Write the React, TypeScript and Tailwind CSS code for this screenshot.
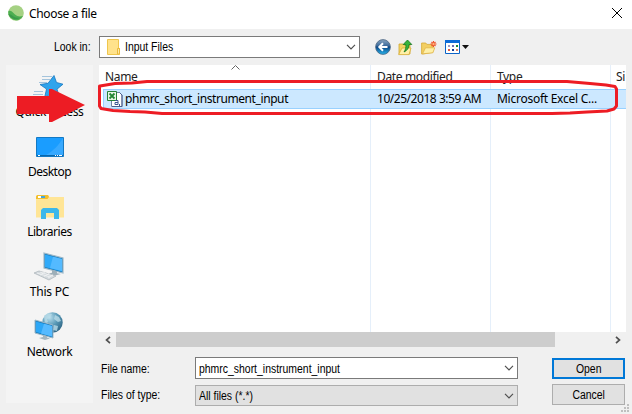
import type { ReactNode } from "react";

const ui = "font-['Noto_Sans','Open_Sans',sans-serif]";
const classic = "font-['Liberation_Sans',Arial,sans-serif]";

function Chevron({ className = "" }: { className?: string }) {
  return (
    <svg className={className} width="10" height="6" viewBox="0 0 10 6" fill="none" stroke="#505050" strokeWidth="1.2">
      <path d="M1 .8 5 4.800 9 .8" />
    </svg>
  );
}

function AppLogo() {
  return (
    <svg width="16" height="16" viewBox="0 0 16 16">
      <circle cx="8" cy="8" r="7.800" fill="#a5d183" />
      <path d="M.4 6C3 5 5 7.500 7 9.500s5 2.300 8 1.500A7.800 7.800 0 0 1 .4 6Z" fill="#4cae50" />
      <path d="M.4 9C3 8.500 5 12 8 12.500s4 .2 5.500-1A7.800 7.800 0 0 1 .4 9Z" fill="#3b9b4a" />
    </svg>
  );
}

function FolderIcon() {
  return (
    <svg width="14" height="16" viewBox="0 0 14 16">
      <path d="M.5.5h11v9h1v6H.5Z" fill="#ffe28b" stroke="#efc64d" />
      <path d="M10.500 9.500h2v5.500h-2Z" fill="#ffe9a6" stroke="#e9b93d" />
    </svg>
  );
}

function BackIcon() {
  return (
    <svg width="16" height="16" viewBox="0 0 16 16">
      <defs>
        <linearGradient id="back" x1="0" y1="0" x2="0" y2="1">
          <stop offset="0" stopColor="#8ba6c0" />
          <stop offset=".42" stopColor="#3c6a9b" />
          <stop offset=".5" stopColor="#0c4584" />
          <stop offset="1" stopColor="#27b5ee" />
        </linearGradient>
      </defs>
      <circle cx="8" cy="8" r="7.400" fill="url(#back)" stroke="#4c6682" strokeWidth=".8" />
      <path d="M12.500 8H5M8 4.300 4.300 8 8 11.700" fill="none" stroke="#fff" strokeWidth="2" />
    </svg>
  );
}

function UpIcon() {
  return (
    <svg width="15" height="17" viewBox="0 0 15 17">
      <path d="M1 5h4l1 1h6v9H1Z" fill="#f3d565" stroke="#cfa52f" strokeWidth=".8" />
      <path d="M.6 15.600 4 9h9l-2 6.600Z" fill="#fff0a8" stroke="#d9ad35" strokeWidth=".8" />
      <path d="M9.500 1 5.200 5.500h2.600c.4 3-.2 5-1.800 7.500 3-1.300 5-4 5-7.500h2.800Z" fill="#37b53c" stroke="#15751d" strokeWidth=".8" />
    </svg>
  );
}

function NewFolderIcon() {
  return (
    <svg width="16" height="15" viewBox="0 0 16 15">
      <path d="M.6 3h4.200l1 1.400h6v8L2 14H.6Z" fill="#f3cf62" stroke="#d7a936" strokeWidth=".8" />
      <path d="m1.500 13.800 3-6h9.300l-2 5Z" fill="#fff0a8" stroke="#e0b54a" strokeWidth=".8" />
      <path d="M12.500 1v6M9.500 4h6M10.500 2l4 4M14.500 2l-4 4" stroke="#ee5028" strokeWidth="1.100" />
      <circle cx="12.500" cy="4" r="1.200" fill="#ffb27c" />
    </svg>
  );
}

function ViewIcon() {
  return (
    <svg width="24" height="14" viewBox="0 0 24 14">
      <path d="M.5.5h14v13H.5Z" fill="#fff" stroke="#0c64c8" />
      <path d="M0 0h15v3H0Z" fill="#0c6bd8" />
      <path d="M3 5h2v2H3Z" fill="#9b9bc9" />
      <path d="M7 5h2v2H7Z" fill="#6d6db4" />
      <path d="M11 5h2v2h-2Z" fill="#1c8b32" />
      <path d="M3 9h2v2H3Z" fill="#e55a3c" />
      <path d="M7 9h2v2H7Z" fill="#0a3a98" />
      <path d="M11 9h2v2h-2Z" fill="#d88166" />
      <path d="M17 5h7l-3.500 4Z" fill="#111" />
    </svg>
  );
}

function QuickAccessIcon() {
  return (
    <svg className="mt-[1px] mr-[3px]" width="32" height="24" viewBox="0 0 32 24">
      <path d="m22 .5 2.500 7 6.500 1.700-6 5L27.500 22 20 18l-7.500 5 2-9L8 9.500l8-1.200Z" fill="#2fa4ec" stroke="#1877c0" strokeWidth=".8" />
      <path d="M10 1.500h10M10 4.500h9M7 7.500h8M2 16.500h9M1 19.500h10" stroke="#8fb8d6" strokeWidth=".8" />
    </svg>
  );
}

function DesktopIcon() {
  return (
    <svg width="28" height="20" viewBox="0 0 28 20">
      <path d="M.5.5h27v19H.5Z" fill="#1a9dff" stroke="#1379c4" />
      <path d="M27 1v17H10C17 14 23 8 27 1Z" fill="#38a9ff" />
      <path d="M1 18.500h26" stroke="#0966aa" />
      <path d="M2 18.500h2M19 18.500h1M21 18.500h1M23 18.500h3" stroke="#fff" />
    </svg>
  );
}

function LibrariesIcon() {
  return (
    <svg className="mt-[1px]" width="28" height="25" viewBox="0 0 28 25">
      <path d="M0 2 1 0h11l1.500 2H28v20.500H0Z" fill="#ffe596" />
      <path d="M0 4V1.500L1 0h11l1 2-1.500 2Z" fill="#f2bf2f" />
      <path d="M2 1h7v2H2Z" fill="#fff" />
      <path d="M5 1h4v2H5Z" fill="#42a6dd" />
      <path d="M5 24V15l2-2h14l2 2v9h-5v-6h-8v6Z" fill="#3db7ea" />
    </svg>
  );
}

function PcIcon() {
  return (
    <svg className="mr-[2px]" width="32" height="29" viewBox="0 0 32 29">
      <path d="m11 1 19 5v15L11 16Z" fill="#187bb9" stroke="#9db8c9" strokeWidth="1.200" />
      <path d="m12 2.500 17 4.500v12.500L12 15Z" fill="#30aaf9" />
      <path d="m20 4.700 9 2.300v12L17 16Z" fill="#54baff" />
      <path d="m19 18 5 1.300v2l4 .7-6 1.500-6-2 3-.8Z" fill="#9eafb9" />
      <path d="m1 21 5-2 17 5-7 4Z" fill="#d3d9dd" stroke="#a9b2b8" strokeWidth=".7" />
      <path d="m4 21 13 4M7 20l13 4M7 23l5-3M11 24.500l5-3M15 26l5-3" stroke="#f1f3f4" strokeWidth=".8" />
    </svg>
  );
}

function NetworkIcon() {
  return (
    <svg className="mr-[1px]" width="30" height="29" viewBox="0 0 30 29">
      <defs>
        <radialGradient id="globe" cx=".35" cy=".25" r=".85">
          <stop offset="0" stopColor="#bce0ee" />
          <stop offset=".5" stopColor="#5798b6" />
          <stop offset="1" stopColor="#285d7c" />
        </radialGradient>
      </defs>
      <circle cx="18.500" cy="10.500" r="10.200" fill="url(#globe)" />
      <path d="m10 4 4-3 4 1-2 4-3 1 1 3-3 2ZM21 3l4 2 2 4-3 1-4-3ZM20 13l4 1-1 5-4-1Z" fill="#b8dbe7" opacity=".8" />
      <path d="m1 8 18 5v13L1 21Z" fill="#187bb9" stroke="#9db8c9" />
      <path d="m2 9.500 16 4.400v10.600L2 20Z" fill="#2ca7f7" />
      <path d="m10 11.700 8 2.200v10.600L7 21.400Z" fill="#55baff" />
      <path d="m9 23 4 1.200v1.300l3 1-5 1.500-6-2 4-1Z" fill="#a6b7c0" />
    </svg>
  );
}

function ExcelIcon() {
  return (
    <svg width="16" height="16" viewBox="0 0 16 16">
      <path d="M4.500 1.500h8l2.500 2.500v11.500H4.500Z" fill="#fff" stroke="#7182a3" />
      <path d="M12.500 1.500 15 4v11.500h-10" fill="none" stroke="#4a5d8c" />
      <path d="M.5.5h9v9h-9Z" fill="#e9f5e4" stroke="#278235" />
      <path d="m2.500 2.500 5 5M7.500 2.500l-5 5" stroke="#258735" strokeWidth="1.800" />
      <path d="M8 9.500h3v4H8v-2h3" fill="none" stroke="#3c5791" />
      <path d="M12.500 13v2" stroke="#3c5791" />
    </svg>
  );
}

function Place({ icon, label, track }: { icon: ReactNode; label: string; track: string }) {
  return (
    <div className="flex h-[60px] flex-col items-center">
      <div className="flex h-[33px] items-center justify-center">{icon}</div>
      <span className={`mt-[1px] text-[12px] leading-4 ${track}`}>{label}</span>
    </div>
  );
}

function Narrow({ children, className = "origin-left" }: { children: ReactNode; className?: string }) {
  return <span className={`inline-block scale-x-[0.87] whitespace-nowrap ${className}`}>{children}</span>;
}

function Annotations() {
  return (
    <svg className="pointer-events-none absolute inset-0" width="632" height="414" viewBox="0 0 632 414">
      <path d="M17 96h32v-7h3l33 16-33 17h-3v-8H17Z" fill="#ed1c24" />
      <path
        d="M100 86 115 83.500 132 83 147 81.500H567L590 83.500 606 85 615 86.500 616.500 89V106L614 109 607 111 587 112 570 113 552 113.500H162L145 112 130 111.500 113 110.500 101 108.500 99.500 106V86Z"
        fill="none"
        stroke="#ed1c24"
        strokeWidth="3"
        strokeLinejoin="round"
      />
    </svg>
  );
}

export default function App() {
  return (
    <div className={`relative flex h-[414px] w-[632px] flex-col overflow-hidden bg-[#f0f0f0] text-black ${ui}`}>
      <header className="flex h-[29px] shrink-0 items-center bg-white pr-[10px] pl-2">
        <div className="mt-[-3px]"><AppLogo /></div>
        <h1 className="mt-[-2px] ml-[5px] flex-1 text-[12px] leading-4 tracking-[-0.33px]">Choose a file</h1>
        <svg className="mt-[-3px]" width="10" height="10" viewBox="0 0 10 10" stroke="#000"><path d="m0 0 10 10M10 0 0 10" /></svg>
      </header>

      <div className={`flex h-[36px] shrink-0 pt-[7px] ${classic}`}>
        <span className="w-[99px] pt-[3px] pl-[54px] text-[12px] leading-4"><Narrow>Look in:</Narrow></span>
        <div className="flex h-[22px] w-[261px] items-center border border-[#7a7a7a] bg-white pr-[3px] pl-[7px]">
          <FolderIcon />
          <span className="ml-[4px] flex-1 text-[12px] leading-4"><Narrow>Input Files</Narrow></span>
          <Chevron />
        </div>
        <div className="ml-[15px] flex h-[22px] items-center">
          <BackIcon />
          <div className="ml-[7px]"><UpIcon /></div>
          <div className="ml-[8px]"><NewFolderIcon /></div>
          <div className="ml-[8px]"><ViewIcon /></div>
        </div>
      </div>

      <div className="flex flex-1 pl-[6px]">
        <nav className="h-[338px] w-[87px] shrink-0 bg-[#f4f4f4] pt-[5px]">
          <Place icon={<QuickAccessIcon />} label="Quick access" track="tracking-[-0.3px]" />
          <Place icon={<DesktopIcon />} label="Desktop" track="tracking-[-0.5px]" />
          <Place icon={<LibrariesIcon />} label="Libraries" track="tracking-[-0.45px]" />
          <Place icon={<PcIcon />} label="This PC" track="tracking-[-0.2px]" />
          <Place icon={<NetworkIcon />} label="Network" track="tracking-[-0.4px]" />
        </nav>

        <main className="ml-[6px] flex w-[527px] flex-col">
          <div className="relative h-[267px] shrink-0 bg-white text-[12px] leading-4">
            <div className="absolute inset-0 grid grid-cols-[272px_120px_120px_15px]">
              <i className="border-r border-[#e5effa]" />
              <i className="border-r border-[#e5effa]" />
              <i className="border-r border-[#e5effa]" />
            </div>
            <svg className="absolute top-0 left-[132px]" width="9" height="5" viewBox="0 0 9 5" fill="none" stroke="#666"><path d="M.5 4.500 4.500.5l4 4" /></svg>
            <div className="relative grid h-[24px] grid-cols-[272px_120px_120px_15px] pt-[4px] tracking-[-0.35px] whitespace-nowrap text-[#222]">
              <span className="pl-[6px]">Name</span>
              <span className="pl-[6px]">Date modified</span>
              <span className="pl-[6px]">Type</span>
              <span className="pl-[5px]">Si</span>
            </div>
            <div className="relative ml-[4px] grid h-[20px] grid-cols-[267px_120px_135px] items-center border border-r-0 border-[#99d1ff] bg-[#cce8ff] whitespace-nowrap">
              <div className="flex items-center pl-[3px]">
                <ExcelIcon />
                <span className="ml-[2px] tracking-[-0.41px]">phmrc_short_instrument_input</span>
              </div>
              <span className="pl-[6px] tracking-[-0.46px]">10/25/2018 3:59 AM</span>
              <span className="pl-[6px] tracking-[-0.26px]">Microsoft Excel C...</span>
            </div>
          </div>

          <div className="flex h-[15px] shrink-0 items-center">
            <div className="flex w-[17px] justify-center">
              <svg width="6" height="8" viewBox="0 0 6 8" fill="none" stroke="#505050" strokeWidth="1.700"><path d="M5 .8 1.500 4 5 7.200" /></svg>
            </div>
            <div className="h-[15px] w-[439px] bg-[#cdcdcd]" />
            <div className="flex flex-1 justify-end pr-[5px]">
              <svg width="6" height="8" viewBox="0 0 6 8" fill="none" stroke="#505050" strokeWidth="1.700"><path d="M1 .8 4.500 4 1 7.200" /></svg>
            </div>
          </div>

          <div className={`mt-[10px] grid grid-cols-[96px_323px_34px_73px] gap-y-[6px] text-[12px] leading-4 ${classic}`}>
            <label className="pt-[4px] pl-[2px]"><Narrow>File name:</Narrow></label>
            <div className="flex h-[22px] items-center border border-[#7a7a7a] bg-white pr-[3px] pl-[3px]">
              <span className="flex-1 pt-px"><Narrow>phmrc_short_instrument_input</Narrow></span>
              <Chevron />
            </div>
            <span />
            <button className="mt-[1px] h-[21px] border-2 border-[#0078d7] bg-[#e1e1e1] leading-4"><Narrow className="origin-center">Open</Narrow></button>

            <label className="pt-[2px] pl-[2px]"><Narrow>Files of type:</Narrow></label>
            <div className="flex h-[21px] items-center border border-[#adadad] bg-[#e1e1e1] pr-[3px] pl-[3px]">
              <span className="flex-1"><Narrow>All files (*.*)</Narrow></span>
              <Chevron />
            </div>
            <span />
            <button className="mt-[-1px] h-[21px] border border-[#adadad] bg-[#e1e1e1] leading-4"><Narrow className="origin-center">Cancel</Narrow></button>
          </div>
        </main>
      </div>

      <svg className="absolute right-[3px] bottom-[2px]" width="8" height="8" viewBox="0 0 8 8" fill="#bfbfbf">
        <path d="M6 0h2v2H6ZM3 3h2v2H3ZM6 3h2v2H6ZM0 6h2v2H0ZM3 6h2v2H3ZM6 6h2v2H6Z" />
      </svg>
      <Annotations />
    </div>
  );
}
